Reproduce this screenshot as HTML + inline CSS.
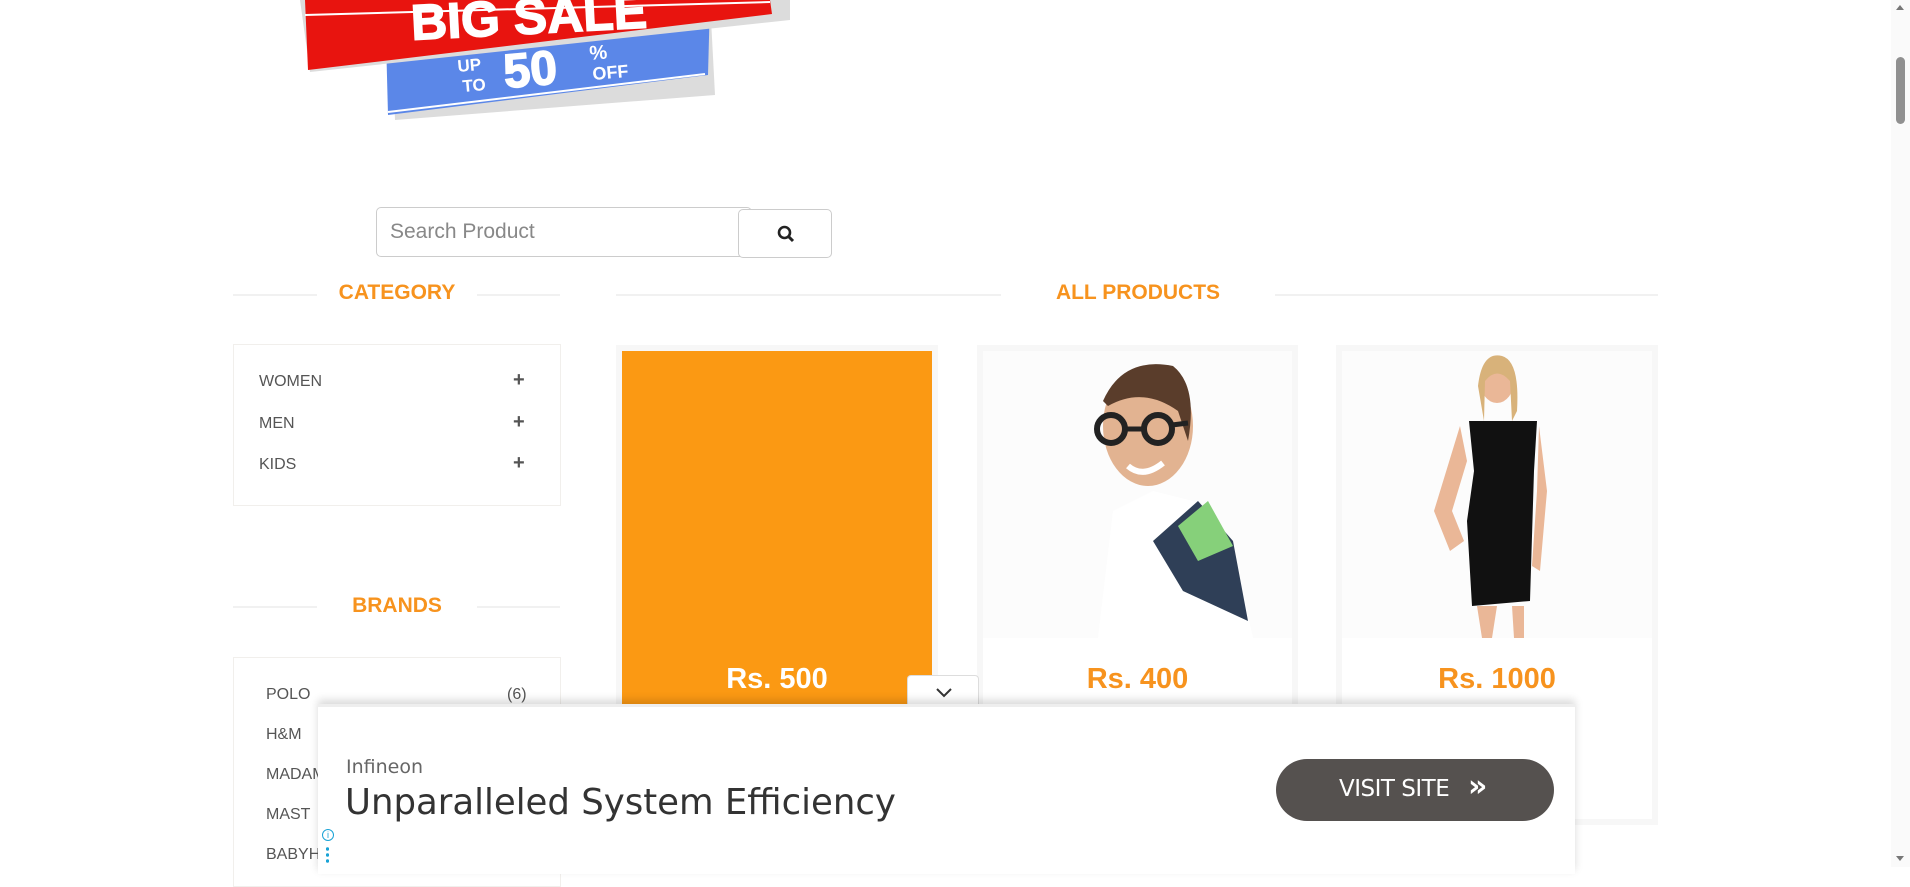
<!DOCTYPE html>
<html><head><meta charset="utf-8"><style>
*{margin:0;padding:0;box-sizing:border-box}
body{width:1910px;height:867px;overflow:hidden;background:#fff;font-family:"Liberation Sans",Arial,sans-serif;position:relative}
.a{position:absolute}
.h{color:#f7931e;font-weight:bold;font-size:21px;text-align:center}
.line{height:2px;background:#f1f1f1}
.box{border:1px solid #f1efec}
.item{font-size:16px;color:#555}
.plus{font-weight:bold;color:#555;font-size:20px}
.card{border:6px solid #f7f7f7;background:#fff}
.price{color:#f7931e;font-weight:bold;font-size:29px;text-align:center;width:100%}
</style></head><body>

<!-- banner -->
<svg class="a" style="left:300px;top:0" width="500" height="130">
<polygon points="90,0 410,0 415,95 95,120" fill="#dcdcdc"/>
<polygon points="85,0 410,0 408,75 88,115" fill="#5b87e8"/>
<polygon points="0,0 490,0 490,20 10,72" fill="#dcdcdc"/>
<polygon points="5,0 470,0 472,14 8,70" fill="#e8140f"/>
<line x1="5" y1="15" x2="470" y2="2" stroke="#fff" stroke-width="2"/>
<line x1="88" y1="112" x2="405" y2="74" stroke="#fff" stroke-width="2"/>
<text x="112" y="40" fill="#fff" font-weight="bold" font-size="50" font-family="Liberation Sans Narrow, Liberation Sans" stroke="#fff" stroke-width="1.5" transform="rotate(-3 110 42)">BIG SALE</text>
<text x="158" y="72" fill="#fff" font-weight="bold" font-size="17" font-family="Liberation Sans" transform="rotate(-5 158 72)">UP</text>
<text x="163" y="92" fill="#fff" font-weight="bold" font-size="17" font-family="Liberation Sans" transform="rotate(-5 163 92)">TO</text>
<text x="205" y="88" fill="#fff" font-weight="bold" font-size="48" font-family="Liberation Sans" stroke="#fff" stroke-width="1.5" transform="rotate(-5 205 88)">50</text>
<text x="290" y="60" fill="#fff" font-weight="bold" font-size="20" font-family="Liberation Sans" transform="rotate(-5 290 60)">%</text>
<text x="293" y="80" fill="#fff" font-weight="bold" font-size="18" font-family="Liberation Sans" transform="rotate(-5 293 80)">OFF</text>
</svg>

<!-- search -->
<div class="a" style="left:376px;top:207px;width:376px;height:50px;border:1px solid #ccc;border-radius:5px;font-size:21px;color:#888;padding:12px 0 0 13px">Search Product</div>
<div class="a" style="left:738px;top:209px;width:94px;height:49px;border:1px solid #ccc;border-radius:5px;background:#fff">
<svg class="a" style="left:38px;top:15px" width="18" height="18"><circle cx="7.5" cy="7.5" r="5.5" fill="none" stroke="#222" stroke-width="2.6"/><line x1="11.5" y1="11.5" x2="16" y2="16" stroke="#222" stroke-width="3"/></svg></div>

<!-- headings -->
<div class="a line" style="left:233px;top:294px;width:84px"></div>
<div class="a line" style="left:477px;top:294px;width:83px"></div>
<div class="a h" style="left:317px;top:281px;width:160px">CATEGORY</div>
<div class="a line" style="left:616px;top:294px;width:385px"></div>
<div class="a line" style="left:1275px;top:294px;width:383px"></div>
<div class="a h" style="left:1001px;top:281px;width:274px">ALL PRODUCTS</div>

<div class="a box" style="left:233px;top:344px;width:328px;height:162px"></div>
<div class="a item" style="left:259px;top:373px">WOMEN</div><div class="a plus" style="left:513px;top:369px">+</div>
<div class="a item" style="left:259px;top:415px">MEN</div><div class="a plus" style="left:513px;top:411px">+</div>
<div class="a item" style="left:259px;top:456px">KIDS</div><div class="a plus" style="left:513px;top:452px">+</div>

<div class="a line" style="left:233px;top:606px;width:84px"></div>
<div class="a line" style="left:477px;top:606px;width:83px"></div>
<div class="a h" style="left:317px;top:594px;width:160px">BRANDS</div>

<div class="a box" style="left:233px;top:657px;width:328px;height:230px"></div>
<div class="a item" style="left:266px;top:686px">POLO</div><div class="a item" style="left:507px;top:686px">(6)</div>
<div class="a item" style="left:266px;top:726px">H&amp;M</div>
<div class="a item" style="left:266px;top:766px">MADAM</div>
<div class="a item" style="left:266px;top:806px">MAST</div>
<div class="a item" style="left:266px;top:846px">BABYHUG</div>

<!-- cards -->
<div class="a card" style="left:616px;top:345px;width:322px;height:480px;background:#fb9913"></div>
<div class="a price" style="left:616px;top:663px;width:322px;color:#fff">Rs. 500</div>

<div class="a card" style="left:977px;top:345px;width:321px;height:480px">
<svg width="309" height="287" style="display:block;background:#fcfcfc">
<path d="M115,287 L130,160 L170,140 L210,150 L250,200 L270,287 Z" fill="#fff"/>
<path d="M170,190 L215,150 L250,190 L265,270 L200,240 Z" fill="#2f3f57"/>
<path d="M195,175 L225,150 L250,195 L215,210 Z" fill="#86d07a"/>
<ellipse cx="165" cy="75" rx="45" ry="60" fill="#e2b391"/>
<path d="M120,50 Q140,5 190,15 Q215,35 205,90 L195,60 Q160,35 125,55 Z" fill="#5a3d2b"/>
<circle cx="128" cy="78" r="14" fill="none" stroke="#222" stroke-width="6"/><circle cx="175" cy="78" r="14" fill="none" stroke="#222" stroke-width="6"/>
<path d="M142,78 L161,78 M189,74 L205,72" stroke="#222" stroke-width="5"/>
<path d="M145,115 Q160,128 180,112" stroke="#fff" stroke-width="6" fill="none"/>
</svg></div>
<div class="a price" style="left:977px;top:663px;width:321px">Rs. 400</div>

<div class="a card" style="left:1336px;top:345px;width:322px;height:480px">
<svg width="310" height="287" style="display:block;background:#fcfcfc">
<path d="M118,75 L92,160 L108,200 L122,190 L110,160 L125,110 Z" fill="#eab797"/>
<path d="M197,75 L205,140 L198,220 L190,215 L195,140 Z" fill="#eab797"/>
<path d="M127,70 L195,70 L192,120 L188,250 L130,255 L125,170 L132,120 Z" fill="#111"/>
<path d="M135,255 L140,287 L150,287 L155,255 M170,255 L172,287 L182,287 L182,255" fill="#eab797"/>
<ellipse cx="155" cy="30" rx="17" ry="22" fill="#eab797"/>
<path d="M136,35 Q140,0 160,5 Q178,10 175,60 L170,70 L168,30 Q155,15 143,30 L142,70 Z" fill="#d8b27a"/>
</svg></div>
<div class="a price" style="left:1336px;top:663px;width:322px">Rs. 1000</div>

<!-- ad -->
<div class="a" style="left:907px;top:675px;width:72px;height:36px;background:#fff;border:1px solid #ddd;border-bottom:none;border-radius:4px 4px 0 0"><svg class="a" style="left:27px;top:11px" width="18" height="12"><path d="M2,2 L9,9 L16,2" stroke="#333" stroke-width="2" fill="none"/></svg></div>
<div class="a" style="left:318px;top:704px;width:1257px;height:170px;background:#fff;border-top:3px solid #eee;box-shadow:0 -4px 8px rgba(0,0,0,.15)"></div>
<div class="a" style="left:346px;top:756px;font-size:19px;color:#666;font-family:'DejaVu Sans',sans-serif">Infineon</div>
<div class="a" style="left:345px;top:782px;font-size:35.5px;color:#333;font-family:'DejaVu Sans',sans-serif">Unparalleled System Efficiency</div>
<div class="a" style="left:1276px;top:759px;width:278px;height:62px;border-radius:31px;background:#55514f;color:#fff;font-size:23px;font-family:'DejaVu Sans',sans-serif;padding:16px 0 0 63px;letter-spacing:-0.5px">VISIT SITE <span style="margin-left:12px;font-weight:bold;font-size:30px;line-height:24px">»</span></div>
<div class="a" style="left:322px;top:829px;width:12px;height:12px;border:1.5px solid #1aa3d6;border-radius:50%;font-size:9px;color:#1aa3d6;text-align:center;line-height:10px">i</div>
<div class="a" style="left:326px;top:846px;width:3px;height:18px;background:radial-gradient(circle,#1aa3d6 1.5px,transparent 2px) 0 0/3px 6px"></div>

<!-- scrollbar -->
<div class="a" style="left:1891px;top:0;width:19px;height:867px;background:#fafafa"></div>
<div class="a" style="left:1896px;top:57px;width:9px;height:67px;background:#909090;border-radius:5px"></div>
<div class="a" style="left:1896px;top:5px;width:0;height:0;border:4px solid transparent;border-bottom:5px solid #777;border-top:none"></div>
<div class="a" style="left:1896px;top:856px;width:0;height:0;border:4px solid transparent;border-top:5px solid #777;border-bottom:none"></div>
</body></html>
